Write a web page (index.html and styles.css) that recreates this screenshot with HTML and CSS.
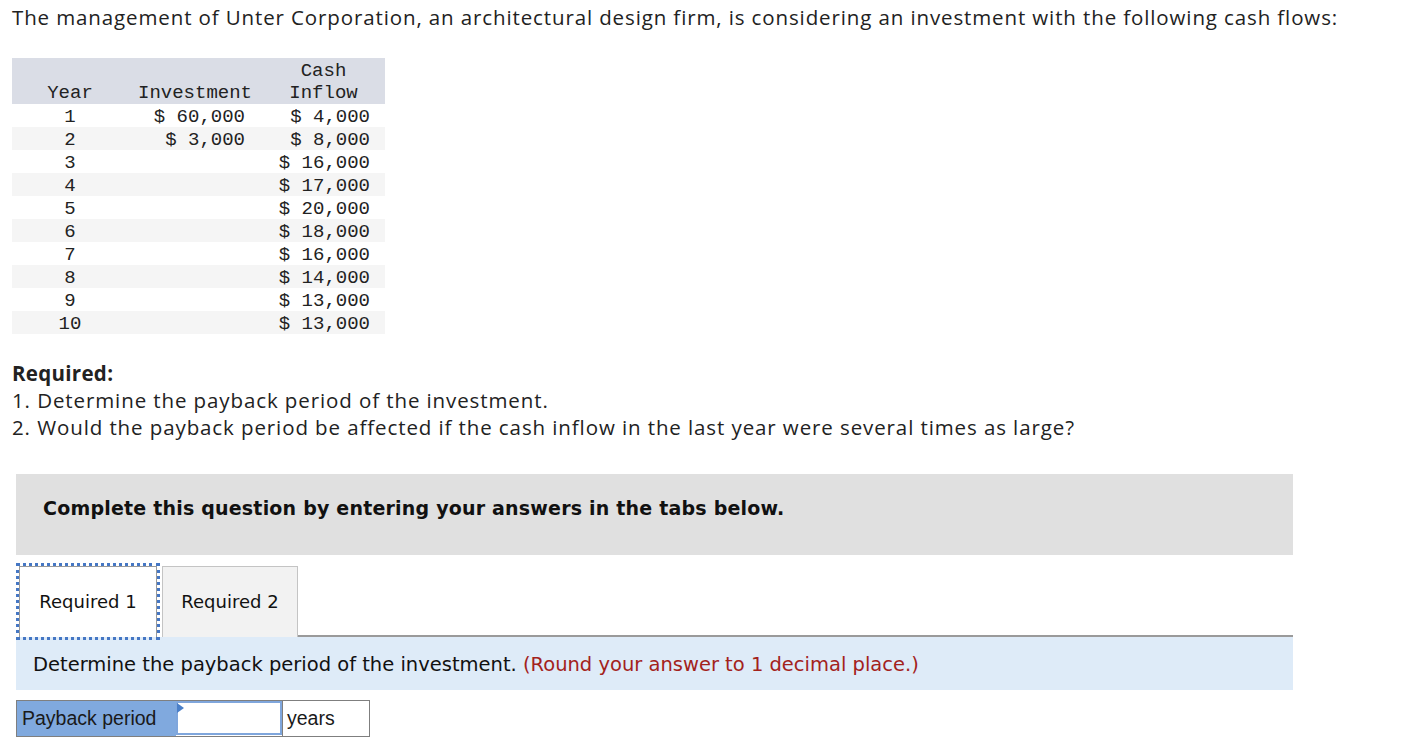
FILE: index.html
```html
<!DOCTYPE html>
<html>
<head>
<meta charset="utf-8">
<link rel="stylesheet" href="styles.css">
</head>
<body>
<div class="page">
  <p class="intro">The management of Unter Corporation, an architectural design firm, is considering an investment with the following cash flows:</p>
  <table class="flows">
    <thead>
      <tr><th class="c-year">Year</th><th class="c-inv">Investment</th><th class="c-cash">Cash<br>Inflow</th></tr>
    </thead>
    <tbody>
      <tr><td class="c-year">1</td><td class="c-inv">$ 60,000</td><td class="c-cash">$ 4,000</td></tr>
      <tr><td class="c-year">2</td><td class="c-inv">$ 3,000</td><td class="c-cash">$ 8,000</td></tr>
      <tr><td class="c-year">3</td><td class="c-inv"></td><td class="c-cash">$ 16,000</td></tr>
      <tr><td class="c-year">4</td><td class="c-inv"></td><td class="c-cash">$ 17,000</td></tr>
      <tr><td class="c-year">5</td><td class="c-inv"></td><td class="c-cash">$ 20,000</td></tr>
      <tr><td class="c-year">6</td><td class="c-inv"></td><td class="c-cash">$ 18,000</td></tr>
      <tr><td class="c-year">7</td><td class="c-inv"></td><td class="c-cash">$ 16,000</td></tr>
      <tr><td class="c-year">8</td><td class="c-inv"></td><td class="c-cash">$ 14,000</td></tr>
      <tr><td class="c-year">9</td><td class="c-inv"></td><td class="c-cash">$ 13,000</td></tr>
      <tr><td class="c-year">10</td><td class="c-inv"></td><td class="c-cash">$ 13,000</td></tr>
    </tbody>
  </table>
  <div class="required">
    <div class="req-title">Required:</div>
    <div>1. Determine the payback period of the investment.</div>
    <div>2. Would the payback period be affected if the cash inflow in the last year were several times as large?</div>
  </div>
</div>
<div class="work">
  <div class="instruct">Complete this question by entering your answers in the tabs below.</div>
  <div class="tabs">
    <div class="tab active">Required 1</div>
    <div class="tab">Required 2</div>
    <div class="tab-rest"></div>
  </div>
  <div class="prompt">Determine the payback period of the investment. <span class="hint">(Round your answer to 1 decimal place.)</span></div>
  <div class="answer">
    <div class="label">Payback period</div>
    <div class="cell"><div class="input"><span class="flag"></span></div></div>
    <div class="unit">years</div>
  </div>
</div>
</body>
</html>
```
FILE: styles.css
```css
html, body {
  margin: 0;
  padding: 0;
  background: #fff;
  color: #1a1a1a;
}
.page {
  padding-left: 12px;
  font-family: "Open Sans", "Lato", sans-serif;
}
.intro {
  margin: 0;
  padding-top: 5px;
  font-size: 20.5px;
  line-height: 24px;
  letter-spacing: 0.88px;
  color: #222;
}
.flows {
  margin-top: 29px;
  border-collapse: collapse;
  font-family: "Liberation Mono", monospace;
  font-size: 19px;
  color: #222;
}
.flows th {
  background: #dadde6;
  font-weight: normal;
  line-height: 22px;
  padding: 2px 0 0;
  vertical-align: bottom;
  text-align: center;
}
.flows td {
  line-height: 19px;
  height: 23px;
  padding: 4px 0 0;
  box-sizing: border-box;
}
.flows tbody tr:nth-child(even) td {
  background: #f5f5f5;
}
.c-year { width: 116px; text-align: center; }
.c-inv { width: 134px; }
.c-cash { width: 123px; }
td.c-inv { text-align: right; padding-right: 17px; }
td.c-cash { text-align: right; padding-right: 15px; }
.required {
  margin-top: 26px;
  font-size: 20.5px;
  line-height: 27px;
  letter-spacing: 0.9px;
  color: #222;
}
.req-title { font-weight: bold; letter-spacing: 0.3px; }
.work {
  margin: 33px 0 0 16px;
  width: 1277px;
  font-family: "DejaVu Sans", Verdana, sans-serif;
}
.instruct {
  background: #e0e0e0;
  height: 81px;
  box-sizing: border-box;
  padding: 22px 0 0 27px;
  font-size: 19px;
  letter-spacing: 0.2px;
  font-weight: bold;
  line-height: 24px;
  color: #111;
}
.tabs {
  display: flex;
  margin-top: 11px;
  height: 71px;
}
.tab {
  font-size: 18px;
  color: #111;
  display: flex;
  align-items: center;
  justify-content: center;
  height: 71px;
  box-sizing: border-box;
  background: #f2f2f2;
  border: 1px solid #c4c4c4;
  border-bottom: none;
  width: 136px;
  padding-bottom: 2px;
}
.tab.active {
  background: #fff;
  width: 138px;
  margin-left: 3px;
  margin-right: 5px;
  border: 1px solid #9a9a9a;
  border-bottom: none;
  outline: 3px dotted #4577c4;
}
.tab-rest {
  flex: 1;
  border-bottom: 2px solid #9a9a9a;
}
.prompt {
  background: #deebf8;
  height: 53px;
  box-sizing: border-box;
  padding: 16px 0 0 17px;
  font-size: 19.5px;
  line-height: 23px;
  color: #111;
}
.hint { color: #a3221c; }
.answer {
  display: flex;
  margin-top: 10px;
  font-family: "Liberation Sans", Arial, sans-serif;
  font-size: 19.5px;
  height: 37px;
}
.answer > div {
  box-sizing: border-box;
  height: 37px;
}
.label {
  width: 160px;
  background: #80a9de;
  border: 1px solid #7f7f7f;
  border-right: none;
  padding-left: 5px;
  line-height: 35px;
  color: #1a1a1a;
}
.cell {
  width: 106px;
  border-top: 1px solid #7f7f7f;
  border-bottom: 1px solid #7f7f7f;
}
.input {
  position: relative;
  height: 34px;
  box-sizing: border-box;
  border: 2px solid #7fa6dc;
  background: #fff;
}
.flag {
  position: absolute;
  left: -1px;
  top: 0;
  width: 0;
  height: 0;
  border-left: 7px solid #4a7fc8;
  border-top: 5px solid transparent;
  border-bottom: 5px solid transparent;
}
.unit {
  width: 88px;
  border: 1px solid #7f7f7f;
  padding-left: 4px;
  line-height: 35px;
  color: #1a1a1a;
}
```
